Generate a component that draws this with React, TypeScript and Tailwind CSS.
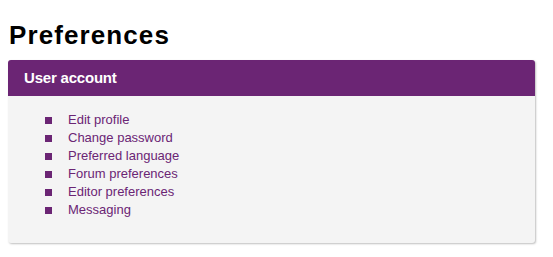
const items = [
  "Edit profile",
  "Change password",
  "Preferred language",
  "Forum preferences",
  "Editor preferences",
  "Messaging",
];

export default function App() {
  return (
    <div className="min-h-screen bg-white pl-2 pr-[18px] pt-5 font-['Liberation_Sans',Arial,sans-serif]">
      <h1 className="ml-[1px] text-[26px] leading-[30px] font-bold tracking-[1.1px] text-black">
        Preferences
      </h1>
      <section className="mt-[10px] w-[527px] rounded-[3px] bg-[#f4f4f4] shadow-[1px_1px_2px_rgba(0,0,0,0.25)] overflow-hidden">
        <header className="h-9 px-4 flex items-center bg-[#6b2574]">
          <h2 className="text-[15px] font-bold tracking-[-0.2px] text-white">User account</h2>
        </header>
        <ul className="pt-[15px] pb-6 pl-[37px]">
          {items.map((item) => (
            <li key={item} className="flex items-center h-[18px]">
              <span className="w-[7px] h-[7px] bg-[#6b2574] shrink-0" />
              <a href="#" className="ml-4 text-[13px] leading-[18px] text-[#6b2574]">
                {item}
              </a>
            </li>
          ))}
        </ul>
      </section>
    </div>
  );
}
